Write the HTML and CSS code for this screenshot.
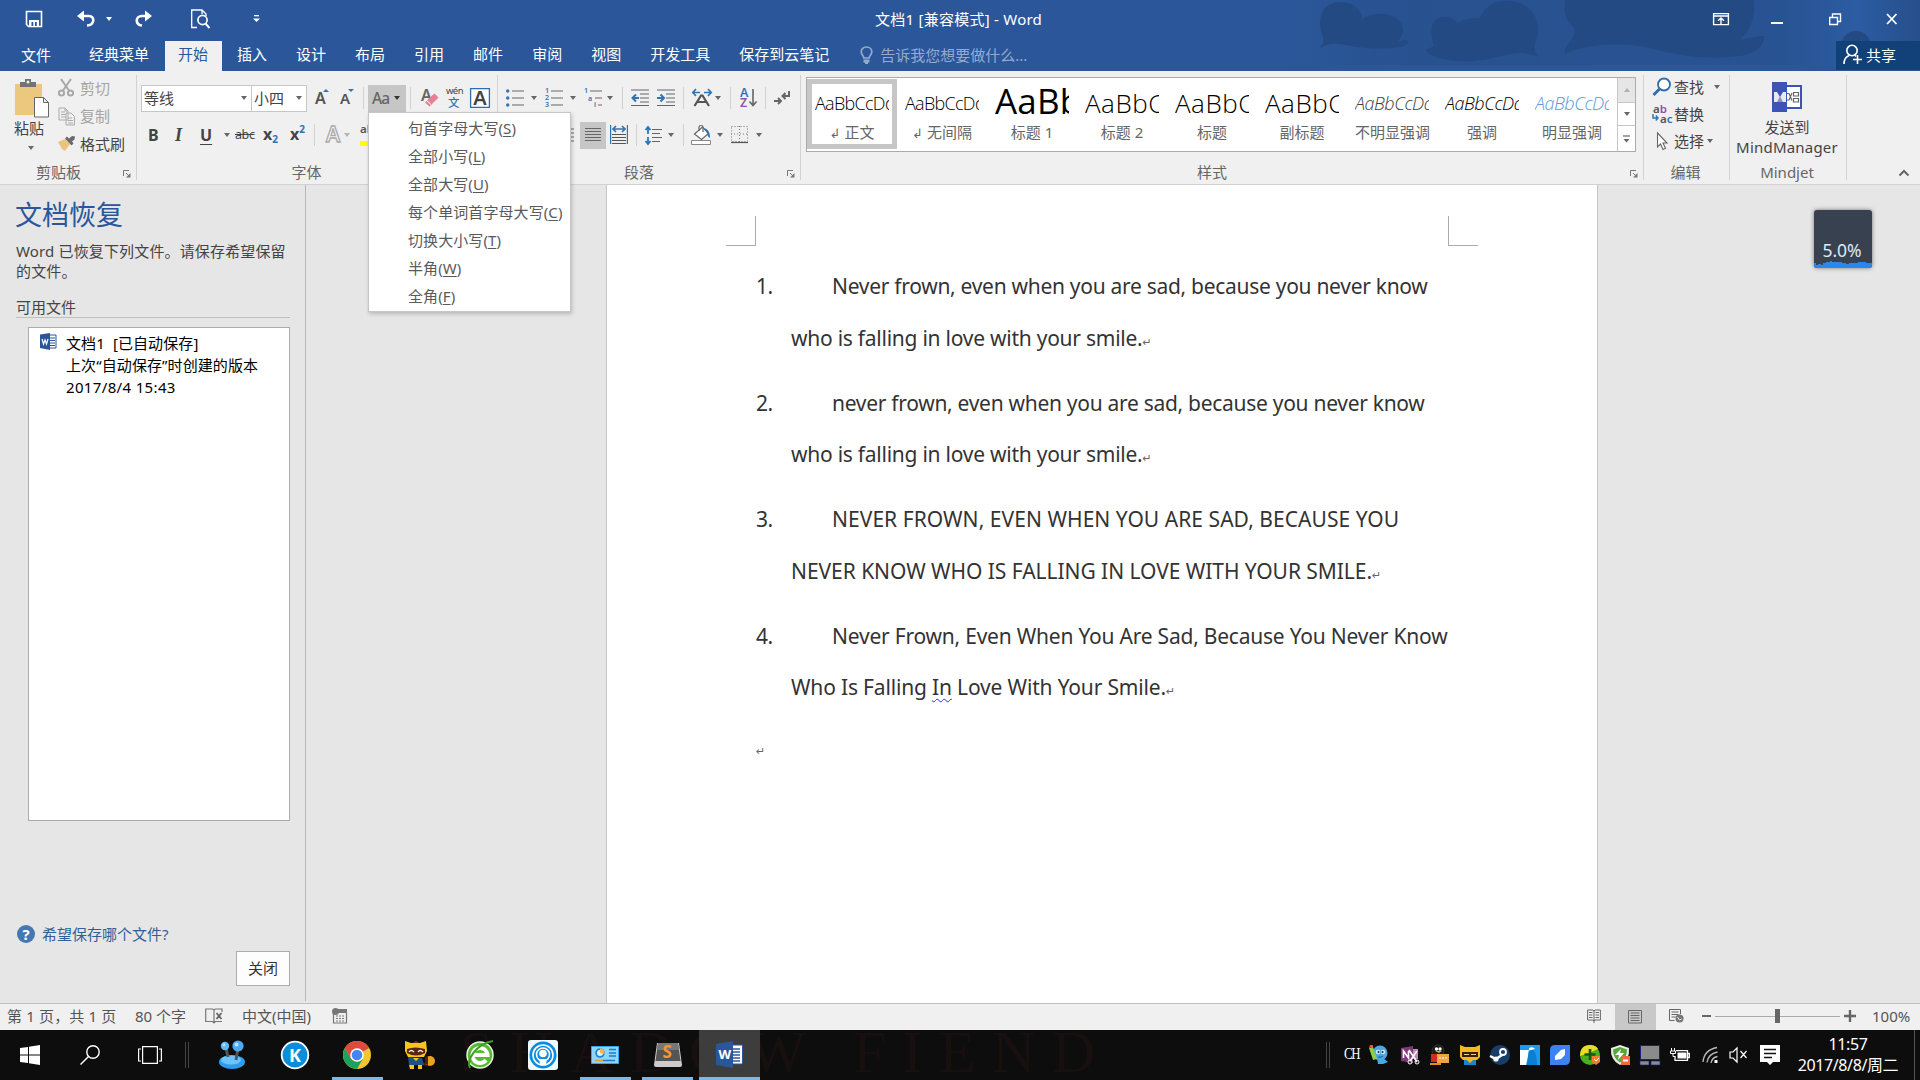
FILE: index.html
```html
<!DOCTYPE html>
<html lang="zh-CN">
<head>
<meta charset="utf-8">
<title>文档1 [兼容模式] - Word</title>
<link rel="stylesheet" href="styles.css">
</head>
<body>
<div class="app">
<header class="head">
  <svg class="head-art" width="640" height="65" viewBox="1280 0 640 65">
    <defs><linearGradient id="g" x1="0" x2="1"><stop offset="0" stop-color="#264f8b" stop-opacity="0"/><stop offset=".2" stop-color="#264f8b" stop-opacity=".7"/><stop offset=".75" stop-color="#264f8b" stop-opacity=".6"/><stop offset=".9" stop-color="#2c5ca3"/><stop offset="1" stop-color="#264f8b"/></linearGradient></defs>
    <rect x="1280" width="640" height="65" fill="url(#g)"/>
    <g fill="#234a82">
      <path d="M1320 48C1328 38 1320 36 1320 24C1320 8 1330 2 1341 2C1354 2 1362 10 1362 20C1374 8 1404 14 1403 30C1403 36 1398 40 1398 42C1408 38 1412 42 1404 46C1380 52 1350 46 1340 44C1332 43 1326 44 1320 48Z"/>
      <path d="M1434 46C1428 28 1432 17 1445 17C1454 17 1458 23 1458 23C1468 17 1476 18 1480 18C1486 4 1498 0 1509 1C1530 2 1539 17 1538 32C1538 42 1530 46 1538 57C1524 50 1512 54 1496 57C1470 66 1430 60 1426 50Z"/>
      <path d="M1565 0H1754C1756 20 1748 32 1740 40C1750 38 1756 36 1764 36C1764 48 1752 56 1730 57C1690 60 1670 52 1640 46C1606 42 1580 46 1565 54C1564 44 1576 40 1574 28C1564 20 1564 8 1565 0Z"/>
      <circle cx="1856" cy="46" r="15"/>
    </g>
  </svg>
  <div class="titlebar">
    <svg width="18" height="18"><path d="M1.500 1.500h15v15h-13l-2-2z" fill="none" stroke="#fff" stroke-width="1.600"/><path d="M4 10h10v6H4z" fill="#fff"/><path d="M6.500 12h1.800v4H6.500z" fill="#2b579a"/><path d="M10 12h1.800v4H10z" fill="#2b579a"/></svg>
    <svg width="20" height="18"><path d="M3 6h9c6 0 6 9-2 9.500" fill="none" stroke="#fff" stroke-width="2.600"/><path d="M0 6l7-5.500v11z" fill="#fff"/></svg>
    <i class="caret white"></i>
    <svg width="20" height="18"><path d="M15 6H8C1 6 1 14.500 8 15.500" fill="none" stroke="#fff" stroke-width="2.600"/><path d="M18 6l-7-5.500v11z" fill="#fff"/></svg>
    <svg width="20" height="20"><path d="M6 18.500H.7V1H11l4 4v2M11 1v4" fill="none" stroke="#fff" stroke-width="1.300"/><circle cx="11.500" cy="11" r="4.600" fill="none" stroke="#fff" stroke-width="1.700"/><path d="M14.500 14.500l4 4.500" stroke="#fff" stroke-width="2"/></svg>
    <svg width="8" height="8"><path d="M1 .7h5" stroke="#fff" stroke-width="1.300"/><path d="M0 3.500h7l-3.500 3.500z" fill="#fff"/></svg>
    <span class="doc-title">文档1 [兼容模式] - Word</span>
    <svg width="17" height="13"><path d="M.6.600h14.800v11H.6zM.6 3h14.800M8 11V5M5 7.800L8 5l3 2.800" fill="none" stroke="#fff" stroke-width="1.400"/></svg>
    <svg width="12" height="13"><path d="M0 10h12" stroke="#fff" stroke-width="2"/></svg>
    <svg width="13" height="13"><path d="M.7 4.500h7.800v7H.7zM3.500 4V1h8v7.500H9" fill="none" stroke="#fff" stroke-width="1.400"/></svg>
    <svg width="12" height="12"><path d="M1 1l9.500 10M10.500 1L1 11" stroke="#fff" stroke-width="1.800"/></svg>
  </div>
  <nav class="tabs">
    <span class="tab file">文件</span><span class="tab">经典菜单</span><span class="tab active">开始</span><span class="tab">插入</span><span class="tab">设计</span><span class="tab">布局</span><span class="tab">引用</span><span class="tab">邮件</span><span class="tab">审阅</span><span class="tab">视图</span><span class="tab">开发工具</span><span class="tab">保存到云笔记</span>
    <span class="tell"><svg width="13" height="18"><path d="M3.800 12C3.800 9.500 1.200 9 1.200 5.800 1.200 3 3.500 1 6.500 1s5.300 2 5.300 4.800C11.800 9 9.200 9.500 9.200 12z" fill="none" stroke="#95abcc" stroke-width="1.700"/><path d="M3.500 13.500h6v3h-1.500v1.500h-3v-1.500h-1.500z" fill="#95abcc"/></svg>告诉我您想要做什么...</span>
    <span class="share"><svg width="20" height="21"><circle cx="9" cy="6.500" r="5.200" fill="none" stroke="#fff" stroke-width="1.600"/><path d="M1 20c0-5 2.500-7.500 5-8.500M11.500 11l1.500 1.500M10 15.500h9M14.500 11v9" fill="none" stroke="#fff" stroke-width="1.600"/></svg>共享</span>
  </nav>
</header>

<section class="ribbon">
  <div class="group clip">
    <div class="clip-body">
      <div class="paste">
        <svg width="36" height="40"><path d="M1 5h27v31H1z" fill="#ecc87e"/><path d="M6 8V3h5V0h6v3h5v5z" fill="#737373"/><circle cx="14" cy="3" r="1.500" fill="#f0f0f0"/><path d="M20.500 18.500h9l5 5V38h-14zM29.500 18.500v5h5" fill="#fff" stroke="#666"/></svg>
        <span>粘贴</span><i class="caret"></i>
      </div>
      <div class="clip-list">
        <span class="off"><svg width="17" height="18"><g fill="none" stroke="#a8a8a8" stroke-width="2"><circle cx="3.500" cy="14" r="2.600"/><circle cx="12.500" cy="14" r="2.600"/><path d="M3 0l8 11.500M13 0L5 11.500"/></g></svg>剪切</span>
        <span class="off"><svg width="18" height="19"><path d="M1 1h6l3 3v9H1zM7 1v3h3M3 5h4M3 7.500h5M3 10h5M8 6h5l3.500 3.500V18H8z" fill="#f0f0f0" stroke="#ababab"/><path d="M10 11h4M10 13.500h5M10 16h5" stroke="#ababab"/></svg>复制</span>
        <span><svg width="18" height="16"><path d="M0 6l7-3 5 5-5 7-3-2z" fill="#ecc280"/><path d="M7 2.500l2-2 2 2 3-2.500 3 .5-.5 3-2.500 2 1.500 2-2 2z" fill="#6a6a6a"/></svg>格式刷</span>
      </div>
    </div>
    <footer><span>剪贴板</span><svg class="launch" width="8" height="8"><path d="M.5 6V.5H6M3 3l3 3" fill="none" stroke="#777"/><path d="M7.500 3v4.500H3z" fill="#777"/></svg></footer>
  </div>

  <div class="group font">
    <div class="row font1">
      <span class="combo">等线<i class="caret"></i></span>
      <span class="combo">小四<i class="caret"></i></span>
      <span class="glyph grow">A<svg width="6" height="4"><path d="M0 3l3-3 3 3z" fill="#2e75b6"/></svg></span>
      <span class="glyph grow small">A<svg width="6" height="4"><path d="M0 0h6L3 3z" fill="#2e75b6"/></svg></span>
      <i class="bar"></i>
      <span class="case">Aa<i class="caret"></i></span>
      <i class="bar"></i>
      <svg width="18" height="20"><text x="0" y="13" class="t-a">A</text><path d="M9.500 9l4-3.500 4 4-9 9-4.500-4z" fill="#e87f95"/><path d="M5.500 12.500l4.500 4" stroke="#fff"/></svg>
      <svg width="17" height="20"><text x="0" y="6" class="t-wen">wén</text><text x="2" y="18.500" class="t-zh">文</text></svg>
      <svg width="20" height="20"><path d="M.6.600h18.800v18.800H.6z" fill="#fff" stroke="#2f6da8" stroke-width="1.300"/><text x="3.200" y="16.500" class="t-box">A</text></svg>
    </div>
    <div class="row font2">
      <b>B</b><b class="it">I</b><b class="un">U</b><i class="caret"></i><span class="strike">abc</span>
      <span class="sub">x<small>2</small></span><span class="sup">x<small>2</small></span><i class="bar"></i>
      <svg width="17" height="20"><text x="1" y="17" class="t-outline">A</text></svg><i class="caret pale"></i>
      <svg width="20" height="22"><text x="0" y="9" class="t-ab">ab</text><path d="M0 17h20v5H0z" fill="#ff0"/></svg>
    </div>
    <footer><span>字体</span></footer>
    <div class="menu">
      <span>句首字母大写(<u>S</u>)</span><span>全部小写(<u>L</u>)</span><span>全部大写(<u>U</u>)</span><span>每个单词首字母大写(<u>C</u>)</span><span>切换大小写(<u>T</u>)</span><span>半角(<u>W</u>)</span><span>全角(<u>F</u>)</span>
    </div>
  </div>

  <div class="group para">
    <div class="row para1">
      <svg width="19" height="18"><path d="M6 2h12M6 9h12M6 16h12" stroke="#666" stroke-width="1.200"/><g fill="#2e75b6"><circle cx="1.700" cy="2" r="1.700"/><circle cx="1.700" cy="9" r="1.700"/><circle cx="1.700" cy="16" r="1.700"/></g></svg><i class="caret"></i>
      <svg width="19" height="20"><path d="M6 3h12M6 10h12M6 17h12" stroke="#666" stroke-width="1.200"/><text x="0" y="5" class="t-n">1</text><text x="0" y="12" class="t-n">2</text><text x="0" y="19" class="t-n">3</text></svg><i class="caret"></i>
      <svg width="19" height="20"><path d="M6 3h12M11 10h7M14 17h4" stroke="#666" stroke-width="1.200"/><text x="0" y="5" class="t-n">1</text><text x="4" y="12.500" class="t-n">a</text><text x="10" y="19" class="t-n">i</text></svg><i class="caret"></i>
      <i class="bar"></i>
      <svg width="18" height="18"><path d="M0 1h18M9 5h9M9 9h9M9 13h9M0 16.500h18" stroke="#666" stroke-width="1.200"/><path d="M8 9H2M5 5.500L1.500 9 5 12.500" fill="none" stroke="#2e75b6" stroke-width="2"/></svg>
      <svg width="18" height="18"><path d="M0 1h18M9 5h9M9 9h9M9 13h9M0 16.500h18" stroke="#666" stroke-width="1.200"/><path d="M0 9h6M3.500 5.500L7 9l-3.500 3.500" fill="none" stroke="#2e75b6" stroke-width="2"/></svg>
      <i class="bar"></i>
      <svg width="20" height="18"><path d="M1 3.500h7M4 0L.8 3.500 4 7M19 3.500h-7M16 0l3.200 3.500L16 7" fill="none" stroke="#2e75b6" stroke-width="1.700"/><path d="M2.500 17L9 6.500h1.500L17 17M5.500 13h9" fill="none" stroke="#555" stroke-width="2.200"/></svg><i class="caret"></i>
      <i class="bar"></i>
      <svg width="18" height="20"><text x="0" y="9" class="t-az">A</text><text x="0" y="19" class="t-az z">Z</text><path d="M13 1v16M9.500 13.500L13 17.500l3.500-4" fill="none" stroke="#666" stroke-width="1.600"/></svg>
      <i class="bar"></i>
      <svg width="17" height="16"><path d="M15 1v5H9M11.500 3L8.500 6l3 3M0 11h6M4 8l3 3-3 3" fill="none" stroke="#666" stroke-width="2"/></svg>
    </div>
    <div class="row para2">
      <svg width="4" height="16"><path d="M0 2h4M0 6h4M0 10h4M0 14h4" stroke="#666" stroke-width="1.200"/></svg>
      <span class="on"><svg width="17" height="16"><path d="M0 1.500h16M0 4.500h16M0 7.500h16M0 10.500h16M0 13.500h16" stroke="#666"/></svg></span>
      <svg width="18" height="20"><path d="M.6 0v19M17.400 0v19" stroke="#2e75b6" stroke-width="1.200"/><path d="M3 4h12M6 1L3 4l3 3M12 1l3 3-3 3" fill="none" stroke="#2e75b6" stroke-width="1.700"/><path d="M2 9.500h14M2 12.500h14M2 15.500h14M2 18.500h14" stroke="#555"/></svg>
      <i class="bar"></i>
      <svg width="18" height="19"><path d="M7 3.500h10M7 7.500h8M7 11.500h10M7 15.500h8" stroke="#666" stroke-width="1.200"/><path d="M3 1v7M.5 4L3 1l2.500 3M3 11v7M.5 15L3 18l2.500-3" fill="none" stroke="#2e75b6" stroke-width="1.800"/></svg><i class="caret"></i>
      <i class="bar"></i>
      <svg width="20" height="20"><path d="M.5 15.500h19v4H.5z" fill="#fff" stroke="#888"/><path d="M3.500 9l8-7 6 6.500-7 6z" fill="#fff" stroke="#666" stroke-width="1.200"/><path d="M8 6V2c0-2 4-2 4 0v5" fill="none" stroke="#666" stroke-width="1.200"/><path d="M13 3c4 1 6 4 6 10-2-1-3-3-2.500-5z" fill="#2e75b6"/></svg><i class="caret"></i>
      <svg width="17" height="18"><path d="M.5.500h16v15H.5zM8.500 0v16M0 8h17" fill="none" stroke="#777" stroke-dasharray="1 2"/><path d="M0 16.500h17" stroke="#555" stroke-width="1.200"/></svg><i class="caret"></i>
    </div>
    <footer><span>段落</span><svg class="launch" width="8" height="8"><path d="M.5 6V.5H6M3 3l3 3" fill="none" stroke="#777"/><path d="M7.500 3v4.500H3z" fill="#777"/></svg></footer>
  </div>

  <div class="group styles">
    <div class="gallery">
      <div class="style sel"><b>AaBbCcDd</b><span><em>↲</em>正文</span></div>
      <div class="style"><b>AaBbCcDd</b><span><em>↲</em>无间隔</span></div>
      <div class="style h1"><b>AaBb</b><span>标题 1</span></div>
      <div class="style h2"><b>AaBbC</b><span>标题 2</span></div>
      <div class="style h2"><b>AaBbC</b><span>标题</span></div>
      <div class="style h2"><b>AaBbC</b><span>副标题</span></div>
      <div class="style slant soft"><b>AaBbCcDd</b><span>不明显强调</span></div>
      <div class="style slant"><b>AaBbCcDd</b><span>强调</span></div>
      <div class="style slant blue"><b>AaBbCcDd</b><span>明显强调</span></div>
      <div class="scroller"><span class="dis"><svg width="6" height="4"><path d="M0 4l3-4 3 4z" fill="#b0b0b0"/></svg></span><span><svg width="6" height="4"><path d="M0 0h6L3 4z" fill="#666"/></svg></span><span><svg width="7" height="8"><path d="M0 1h7" stroke="#666" stroke-width="1.200"/><path d="M.5 4h6L3.500 7.500z" fill="#666"/></svg></span></div>
    </div>
    <footer><span>样式</span><svg class="launch" width="8" height="8"><path d="M.5 6V.5H6M3 3l3 3" fill="none" stroke="#777"/><path d="M7.500 3v4.500H3z" fill="#777"/></svg></footer>
  </div>

  <div class="group edit">
    <div class="edit-list">
      <span><svg width="20" height="20"><circle cx="12" cy="7.500" r="6" fill="#fff" stroke="#2f6da8" stroke-width="1.800"/><path d="M7.500 12L1.500 18" stroke="#2f6da8" stroke-width="2.800"/></svg>查找<i class="caret wide"></i></span>
      <span><svg width="20" height="20"><text x="1" y="9" class="t-ab">a<tspan fill="#8e4fae">b</tspan></text><text x="8" y="18.500" class="t-ab">a<tspan fill="#2e75b6">c</tspan></text><path d="M1 10v4h5M3.800 11.500L6 14l-2.200 2.500" fill="none" stroke="#2e75b6" stroke-width="1.500"/></svg>替换</span>
      <span><svg width="20" height="20"><path d="M5.500 2v14l3-3 2.500 5.500 2.500-1.200L11 12h4z" fill="#fff" stroke="#666" stroke-width="1.100"/></svg>选择<i class="caret"></i></span>
    </div>
    <footer><span>编辑</span></footer>
  </div>

  <div class="group mind">
    <div class="mind-body">
      <svg width="30" height="30"><path d="M14 4h15v22H14z" fill="#fff" stroke="#3c55b5" stroke-width="2"/><path d="M0 0h15v30H0z" fill="#3c55b5"/><path d="M2 10h3l3 5 3-5h3v10H2z" fill="#e8eaf2"/><path d="M5 20l3-6 3 6z" fill="#8f96ab"/><path d="M15 11.500h2l3 7M20 11l-3 7h-2M21.500 10.500h5v3.500h-5zM21.500 16.500h5V20h-5z" fill="none" stroke="#666" stroke-width="1.200"/></svg>
      <span>发送到</span><span class="mm">MindManager</span>
    </div>
    <footer><span>Mindjet</span></footer>
  </div>
  <svg class="collapse" width="12" height="8"><path d="M1.500 6.500L6 2l4.500 4.500" fill="none" stroke="#666" stroke-width="2"/></svg>
</section>

<main class="work">
  <aside class="recovery">
    <h1>文档恢复</h1>
    <p>Word 已恢复下列文件。请保存希望保留的文件。</p>
    <h2>可用文件</h2>
    <div class="files">
      <svg width="17" height="17"><path d="M8 2h8v13H8z" fill="#fff" stroke="#2b579a"/><path d="M10 5h5M10 7.500h5M10 10h5M10 12.500h5" stroke="#2b579a"/><path d="M0 1.500L10 0v17L0 15z" fill="#2b579a"/><path d="M2 6l1.500 5L5 7l1.500 4L8 6" fill="none" stroke="#fff" stroke-width="1.200"/></svg>
      <div>文档1&nbsp; [已自动保存]<br>上次“自动保存”时创建的版本<br><span class="date">2017/8/4 15:43</span></div>
    </div>
    <div class="help"><span class="q">?</span>希望保存哪个文件?</div>
    <button class="close">关闭</button>
  </aside>
  <div class="canvas">
    <article class="page">
      <div class="marks"><i class="ml"></i><i class="mr"></i></div>
      <ol class="doc">
        <li><span class="num">1.</span><p><span class="l1 a">Never frown, even when you are sad, because you never know</span><br><span class="b">who is falling in love with your smile.</span><em>↵</em></p></li>
        <li><span class="num">2.</span><p><span class="l1 a">never frown, even when you are sad, because you never know</span><br><span class="b">who is falling in love with your smile.</span><em>↵</em></p></li>
        <li><span class="num">3.</span><p><span class="l1 c">NEVER FROWN, EVEN WHEN YOU ARE SAD, BECAUSE YOU</span><br><span class="d">NEVER KNOW WHO IS FALLING IN LOVE WITH YOUR SMILE.</span><em>↵</em></p></li>
        <li><span class="num">4.</span><p><span class="l1 e">Never Frown, Even When You Are Sad, Because You Never Know</span><br><span class="f">Who Is Falling <u class="wavy">In</u> Love With Your Smile.</span><em>↵</em></p></li>
      </ol>
      <div class="empty"><em>↵</em></div>
    </article>
  </div>
  <div class="gauge"><span>5.0%</span><svg width="58" height="7"><path d="M0 2h2v2h2v-1h3v1h2V2h3V1h4V0h2v1h10v1h4v1h3V2h9V1h8v1h6v5H0z" fill="#2b87ee"/></svg></div>
</main>

<div class="status">
  <span class="s-page">第 1 页，共 1 页</span><span>80 个字</span>
  <svg width="18" height="16"><path d="M9 2v13M9 2L7.500 1H.7v12.500h6.800L9 15l1.500-1.500H17M9 2l1.500-1H17v3" fill="none" stroke="#777" stroke-width="1.200"/><path d="M11.500 5l5 6M16.500 5l-5 6" stroke="#666" stroke-width="1.800"/></svg>
  <span>中文(中国)</span>
  <svg class="macro" width="16" height="16"><path d="M1.500 4h13v11h-13z" fill="none" stroke="#777" stroke-width="1.200"/><path d="M6 1h9v4H6z" fill="#777"/><circle cx="3.500" cy="3.500" r="3.500" fill="#777"/><path d="M4 8h9M4 10.500h9M4 13h9" stroke="#777" stroke-dasharray="2 1"/></svg>
  <div class="views">
    <svg width="14" height="14"><path d="M7 2v12M7 2L6 1H.6v10H6l1 1 1-1h5.400V1H8zM2 3.500h3.500M2 6h3.500M2 8.500h3.500M8.500 3.500H12M8.500 6H12M8.500 8.500H12" fill="none" stroke="#666"/></svg>
    <span class="vsel"><svg width="15" height="14"><path d="M.5.500h13v12.500H.5zM2.500 3h9M2.500 5.500h9M2.500 8h9M2.500 10.500h9" fill="none" stroke="#666"/></svg></span>
    <svg width="15" height="14"><path d="M5.500 11.500H.5V.5h11V5M2.500 3h7M2.500 5.500h7M2.500 8h4" fill="none" stroke="#666"/><circle cx="10.500" cy="9.500" r="4" fill="#777"/><path d="M8.500 8l2 3 2-1" fill="none" stroke="#eee"/></svg>
    <i class="minus"></i><span class="track"><i></i></span>
    <svg width="12" height="12"><path d="M6 0v12M0 6h12" stroke="#666" stroke-width="2.400"/></svg>
    <span>100%</span>
  </div>
</div>

<div class="taskbar">
  <div class="wall">SHADOW FIEND</div>
  <div class="tasks">
    <span><svg width="20" height="20"><path d="M0 3l8-1v7.500H0zM9 1.800L20 0v9.500H9zM0 10.500h8V18l-8-1zM9 10.500h11V20L9 18.200z" fill="#fff"/></svg></span>
    <span><svg width="20" height="20"><circle cx="13" cy="7" r="6.200" fill="none" stroke="#fff" stroke-width="1.400"/><path d="M8.500 11.500L.5 19.500" stroke="#fff" stroke-width="1.500"/></svg></span>
    <span><svg width="24" height="20"><path d="M4.600 1.600h14.800v16.800H4.600zM3 4H.6v12H3M21 4h2.400v12H21" fill="none" stroke="#fff" stroke-width="1.200"/></svg></span>
    <span><svg width="5" height="26"><path d="M.5 0v26M3.500 0v26" stroke="#444"/></svg></span>
    <span class="joy"><svg width="28" height="30"><ellipse cx="14" cy="22" rx="13" ry="7" fill="#2f9bf0"/><ellipse cx="13" cy="20" rx="10" ry="4.500" fill="#6cc4ff"/><path d="M8 8l2 9M20 8l-2 12" stroke="#555" stroke-width="3"/><circle cx="7" cy="6" r="4.200" fill="#5db8fb"/><circle cx="20" cy="6" r="5.600" fill="#4aaaf5"/><circle cx="18.500" cy="4.500" r="2" fill="#b5e2ff"/><circle cx="6" cy="5" r="1.400" fill="#b5e2ff"/></svg></span>
    <span><svg width="30" height="30"><circle cx="15" cy="15" r="13.300" fill="#0a8ddb" stroke="#fff" stroke-width="1.800"/><text x="9" y="21.500" class="t-k">K</text></svg></span>
    <span class="run"><svg width="28" height="28" viewBox="-14 -14 28 28"><circle r="14" fill="#f3c52f"/><path d="M0 0L-12.100 -7A14 14 0 0 1 12.100 -7z" fill="#dd4b3e"/><path d="M-12.100 -7A14 14 0 0 0 0 14L6 3.500-6 3.500z" fill="#1fa05d"/><path d="M0-7H12.100A14 14 0 0 0-12.100-7L-6 3.500z" fill="#dd4b3e"/><circle r="6.800" fill="#fff"/><circle r="5.300" fill="#4486f4"/></svg></span>
    <span><svg width="31" height="30"><path d="M17 23q6 3 9-1" fill="none" stroke="#4b220e" stroke-width="3"/><ellipse cx="26" cy="21" rx="5" ry="5" fill="#e9a21c"/><path d="M21 17l3-1v9l-3-1z" fill="#4b220e"/><path d="M1 1l6 2h9l6-2 1 10-3 6H4l-3-6z" fill="#f8c51e"/><path d="M9 3q3-4 6 0z" fill="#6b3418"/><path d="M3 9q8-3 18 0v4q-9 5-18 0z" fill="#5a2414"/><path d="M5 12q2-3 5 0M14 12q2-3 5 0" fill="none" stroke="#f5efe0" stroke-width="1.300"/><path d="M4 17l14 1 2 7H5z" fill="#1d5286"/><path d="M9 18l3 3 3-3zM5 25h5v4H6zM14 25h4v4h-4z" fill="#f8c51e"/></svg></span>
    <span><svg width="30" height="30"><circle cx="14" cy="15" r="13" fill="#58ba33" stroke="#e8f5e0" stroke-width="1.500"/><path d="M20 20a7.500 7.500 0 1 1 1.500-5H8" fill="none" stroke="#fff" stroke-width="4"/><path d="M4 28C0 20 10 4 27 1" fill="none" stroke="#3c9c25" stroke-width="2"/></svg></span>
    <span><svg width="30" height="30"><rect width="30" height="30" rx="3" fill="#f1f9fd"/><circle cx="15" cy="15" r="13.500" fill="#0e8ade"/><circle cx="15" cy="15" r="10" fill="none" stroke="#fff" stroke-width="1.600"/><circle cx="15" cy="14.500" r="6.500" fill="none" stroke="#fff" stroke-width="1.600"/><circle cx="15" cy="13.500" r="3.800" fill="#fff"/><path d="M11 19h8l-1 5q-3 2-6 0z" fill="#fff"/></svg></span>
    <span class="run"><svg width="28" height="20"><path d="M.5 1.500h27v17H.5z" fill="#8fd4fb" stroke="#38a3e8"/><circle cx="9" cy="8" r="4.800" fill="#1d86d8"/><circle cx="9" cy="8" r="3" fill="#d8f0ff"/><path d="M9 8V3.200A4.800 4.800 0 0 1 13.500 9z" fill="#f7b64a"/><path d="M18 4.500h7M18 8h7M18 11h7" stroke="#1d7cc9" stroke-width="1.600"/><path d="M4 15.500h8" stroke="#ef9b2e" stroke-width="1.500"/><path d="M12 15.500h12" stroke="#1d7cc9" stroke-width="1.500"/></svg></span>
    <span class="run"><svg width="28" height="26"><path d="M3 1h22l3 22q0 2-2 2H2q-2 0-2-2z" fill="#ccc"/><path d="M4 1h20l2.500 18h-25z" fill="#555"/><path d="M4 1h20l1 7H3z" fill="#777"/><text x="8.500" y="16" class="t-s">S</text></svg></span>
    <span class="run cur"><svg width="28" height="28"><path d="M14 4h12.500v19H14z" fill="#fff" stroke="#2b579a"/><path d="M16 8h8M16 11h8M16 14h8M16 17h8M16 20h8" stroke="#2b579a" stroke-width="1.400"/><path d="M0 3L17 0v27L0 24z" fill="#2b579a"/><text x="2.500" y="18" class="t-w">W</text></svg></span>
  </div>
  <div class="tray">
    <svg width="5" height="26"><path d="M.5 0v26M3.500 0v26" stroke="#444"/></svg>
    <span class="ch">CH</span>
    <svg width="20" height="20"><circle cx="11" cy="8" r="7.500" fill="#4aa8e2"/><path d="M8 13h6l5 4-5 2H9z" fill="#4aa8e2"/><path d="M0 3l4-1 4 12-4 1z" fill="#8fcf4a"/><path d="M0 3l4-1V0H1z" fill="#e5543c"/><circle cx="9" cy="7" r="2.300" fill="#cdeafa"/><circle cx="14" cy="7" r="2.300" fill="#cdeafa"/><circle cx="9.500" cy="7" r="1" fill="#123"/><circle cx="13.500" cy="7" r="1" fill="#123"/><path d="M9 12q3 1 5-1" fill="none" stroke="#1b5c8e"/></svg>
    <svg width="20" height="20"><path d="M0 3l12-2v17L0 16z" fill="#80397b"/><path d="M12 4h5v10h-5z" fill="#b98cb5"/><path d="M2.500 13V6l5 7V6M8 5l8 12M16 6L9 16" fill="none" stroke="#fff" stroke-width="1.600"/><circle cx="9" cy="17" r="2" fill="none" stroke="#fff"/><circle cx="16" cy="17" r="2" fill="none" stroke="#fff"/></svg>
    <svg width="20" height="20"><ellipse cx="8" cy="6" rx="6" ry="6" fill="#1b1b1b" stroke="#333"/><circle cx="6.500" cy="4" r="1.700" fill="#fff"/><circle cx="10" cy="4" r="1.700" fill="#fff"/><path d="M5 6h7l-3 2z" fill="#f4a51c"/><path d="M1 9h12v8H1z" fill="#d02d1f"/><path d="M7 9h12v9H7z" fill="#f0a63e"/><path d="M9 13h8" stroke="#fff" stroke-dasharray="2 1"/><path d="M0 18h11v2H0z" fill="#e88b1c"/></svg>
    <svg width="20" height="20"><path d="M0 0l5 2h10l5-2v12l-3 3H3l-3-3z" fill="#f3bb20"/><path d="M2 7h16v5H2z" fill="#3a1c10"/><path d="M4 9.500h5M11 9.500h5" stroke="#e8d090"/><path d="M4 15h12v5H4z" fill="#1e82cf"/><path d="M7 15h6l-3 3z" fill="#f3bb20"/></svg>
    <svg width="20" height="20"><circle cx="10" cy="10" r="10" fill="#173e68"/><circle cx="13" cy="7" r="3" fill="none" stroke="#fff" stroke-width="1.800"/><path d="M0 11l6 3 6-4" fill="none" stroke="#fff" stroke-width="2.500"/><circle cx="6" cy="14" r="2.600" fill="#fff"/></svg>
    <svg width="20" height="20"><path d="M0 0h20v20H0z" fill="#1b9bf0"/><path d="M0 5h9q-1 7-3 15H0z" fill="#fff"/><path d="M9 5q8-3 8 15H7z" fill="#0a7fd4"/><path d="M9 3q4-2 6 1l-6 1.500z" fill="#fff"/></svg>
    <svg width="20" height="20"><path d="M5 0h15v15q0 5-5 5H0V5q0-5 5-5z" fill="#3c82f2"/><path d="M5 15V11l6-6 4-1v6l-4 4z" fill="#fff"/></svg>
    <svg width="20" height="20"><circle cx="10" cy="10" r="10" fill="#4caf20"/><path d="M0 11Q0 0 10 0 16 0 18 4 10 8 0 11z" fill="#e9dc2c"/><path d="M10 4v11M4.500 9.500h11" stroke="#115c12" stroke-width="2.600"/><path d="M12 11h8v6l-4 3-4-3z" fill="#ef7e2f"/><path d="M14 14l2 2 3-3" fill="none" stroke="#fff"/></svg>
    <svg width="20" height="20"><path d="M10 0l9 3q1 12-9 17Q0 15 1 3z" fill="#ececec"/><path d="M10 2l7 2.500q0 9-7 13-7-4-7-13z" fill="#58a839"/><path d="M11 4L5 10h4l-1 5 6-7h-4z" fill="#fff"/><path d="M11 11h9v9h-9z" fill="#ef6a43"/><path d="M13 15.500h5" stroke="#fff" stroke-width="2"/></svg>
    <svg width="20" height="20"><path d="M.5.500h19v14H.5z" fill="#8b8b8b" stroke="#1c1f80"/><path d="M0 16h9v4H0zM11 16h9v4h-9z" fill="#8b8b8b" stroke="#1c1f80" stroke-width=".6"/></svg>
    <svg width="20" height="20"><path d="M6 5.600h11.500v9.800H5V11M17.500 8.500h1.800v4h-1.800" fill="none" stroke="#fff" stroke-width="1.300"/><path d="M7.500 7.500h9v6h-9z" fill="#fff"/><path d="M1.500 3v3M4.500 3v3M.5 6h5v2.500H.5zM3 8v3.500h2" fill="none" stroke="#fff"/></svg>
    <svg width="18" height="20"><g fill="none" stroke="#bbb" stroke-width="1.300"><path d="M1 17Q2 5 15 2.500M5 17.500Q6 9 15.500 7M9 18Q10 12.500 15.500 11.500"/></g><path d="M12.500 15h3v3h-3z" fill="#fff"/></svg>
    <svg width="20" height="20"><path d="M1 7h3l4-4v14l-4-4H1zM11.500 6l6 7M17.500 6l-6 7" fill="none" stroke="#fff" stroke-width="1.200"/></svg>
    <svg width="20" height="20"><path d="M0 0h20v17h-7l-3 3-3-3H0z" fill="#fff"/><path d="M4 4.500h12M4 8.500h12M4 12.500h8" stroke="#111" stroke-width="1.300"/></svg>
    <div class="clock">11:57<br>2017/8/8/周二</div>
    <i class="edge"></i>
  </div>
</div>
</div>
</body>
</html>
```
FILE: styles.css
```css
* { box-sizing: border-box; }
body { margin: 0; background: #e6e6e6; overflow: hidden; }
.app { width: 1920px; height: 1080px; display: grid; grid-template-rows: 71px 114px 818px 27px 50px; font: 15px/20px "Noto Sans", "Noto Sans CJK SC", sans-serif; color: #444; }
svg { display: block; overflow: visible; flex: none; }
i, em { font-style: normal; }
.caret { display: block; width: 0; height: 0; border: 3.5px solid transparent; border-top: 4px solid #666; border-bottom: 0; }
.caret.white { border-top-color: #fff; }
.caret.pale { border-top-color: #b5b5b5; }

/* header */
.head { position: relative; background: #2b579a; color: #fff; display: grid; grid-template-rows: 41px 30px; }
.head-art { position: absolute; right: 0; top: 0; }
.titlebar { position: relative; display: grid; grid-template-columns: 52px 29px 28px 57px 62px 622px 838px 58px 58px 57px 12px; padding: 0 0 3px 25px; align-items: center; }
.doc-title { white-space: nowrap; letter-spacing: .25px; }
.tabs { position: relative; display: flex; align-items: stretch; padding-left: 21px; gap: 29px; line-height: 26px; white-space: nowrap; }
.tab.file { margin-right: 9px; padding-top: 1px; }
.tab.active { background: #f0f0f0; color: #2b579a; padding: 0 14px 0 13px; margin: 0 -14px 0 -13px; }
.tell { display: flex; align-items: center; gap: 7px; color: #95abcc; margin-left: 2px; padding-bottom: 2px; }
.share { margin-left: auto; width: 84px; height: 29px; background: #124078; display: flex; align-items: center; gap: 3px; padding: 0 0 2px 7px; }

/* ribbon */
.ribbon { background: #f0f0f0; border-bottom: 1px solid #d2d2d2; display: flex; position: relative; white-space: nowrap; }
.group { position: relative; display: flex; flex-direction: column; height: 105px; margin-top: 4px; border-right: 1px solid #d2d2d2; flex: none; }
.group footer { margin-top: auto; height: 16px; line-height: 16px; display: grid; grid-template-columns: 1fr; text-align: center; color: #666; position: relative; }
.launch { position: absolute; right: 5px; top: 6px; }
.clip { width: 137px; } .font { width: 361px; } .para { width: 303px; } .styles { width: 843px; } .edit { width: 86px; } .mind { width: 117px; }
.clip footer { padding-right: 19px; }
.styles footer { padding-right: 20px; }
.para footer { padding-right: 20px; }
.font footer { padding-right: 21px; }
.edit footer, .mind footer { padding-right: 2px; }
.clip-body { display: flex; }
.paste { width: 58px; display: flex; flex-direction: column; align-items: center; padding-top: 4px; }
.paste span { line-height: 20px; margin-top: -1px; }
.paste svg { margin-left: 6px; }
.paste .caret { margin-top: 8px; margin-left: 4px; }
.clip-list { display: grid; grid-auto-rows: 28px; margin-top: -1px; }
.clip-list span { display: flex; align-items: center; gap: 5px; }
.clip-list svg { width: 17px; }
.off { color: #a5a5a5; }
.row { display: grid; align-items: center; height: 40px; }
.font1 { grid-template-columns: 110px 64px 25px 23px 5px 42px 11px 25px 24px 20px; padding: 0 0 0 4px; margin-top: 3px; }
.font2 { grid-template-columns: 27px 25px 24px 11px 28px 27px 24px 11px 19px 16px 20px; padding-left: 11px; height: 34px; }
.bar { width: 1px; height: 22px; background: #d0d0d0; }
.combo { border: 1px solid #c6c6c6; background: #fff; height: 27px; line-height: 24px; padding-left: 2px; display: flex; align-items: center; justify-content: space-between; padding-right: 4px; width: 111px; }
.combo + .combo { width: 56px; }
.glyph { font-weight: 600; font-size: 16px; color: #555; position: relative; width: 14px; }
.glyph.small { font-size: 15px; }
.glyph svg { position: absolute; right: 0; top: 1px; }
.case { background: #c6c6c6; height: 27px; width: 38px; display: flex; align-items: center; padding-left: 4px; gap: 5px; color: #666; font-weight: 500; font-size: 15.5px; letter-spacing: -.8px; }
.case .caret { border-top-color: #333; }
.row b { font-size: 16px; color: #444; }
.it { font-style: italic; font-family: "Liberation Serif", serif; font-size: 18px !important; }
.un { text-decoration: underline; text-underline-offset: 3px; width: 12px; }
.strike { text-decoration: line-through; font-size: 12.5px; letter-spacing: -.4px; }
.sub, .sup { font-weight: 700; font-size: 16px; }
.sub small, .sup small { font-size: 10px; color: #2e75b6; position: relative; }
.sub small { top: 3px; } .sup small { top: -7px; }
.t-a { font: 600 16px "Noto Sans"; fill: #666; }
.t-wen { font: 9.5px "Noto Sans"; letter-spacing: -.6px; fill: #444; }
.t-zh { font: 500 11.5px "Noto Sans CJK SC"; fill: #2e75b6; }
.t-box { font: 600 20px "Noto Sans"; fill: #444; }
.t-outline { font: 600 21px "Noto Sans"; fill: #f6f6f6; stroke: #aaa; stroke-width: 1.3px; }
.t-ab { font: 600 11.5px "Noto Sans"; fill: #555; }
.t-n { font: 600 7px "Noto Sans"; fill: #2e75b6; }
.t-az { font: 600 12.5px "Noto Sans"; fill: #2e75b6; }
.t-az.z { fill: #8e4fae; }
.t-k { font: 700 18px "Noto Sans"; fill: #fff; }
.t-s { font: 700 17px "Noto Sans"; fill: #f79433; }
.t-w { font: 700 13px "Noto Sans"; fill: #fff; }

.menu { position: absolute; left: 231px; top: 37px; width: 203px; height: 200px; background: #fff; border: 1px solid #c6c6c6; box-shadow: 1px 2px 4px rgba(0,0,0,.2); z-index: 5; padding: 1px 0 0 39px; display: grid; grid-auto-rows: 28px; line-height: 28px; letter-spacing: .08px; color: #5a5a5a; }
.menu u { text-underline-offset: 2px; }

.para1 { grid-template-columns: 25px 14px 25px 14px 23px 15px 9px 26px 26px 9px 23px 15px 10px 25px 9px 17px; padding-left: 8px; margin-top: 3px; }
.para2 { grid-template-columns: 10px 30px 26px 9px 23px 15px 8px 26px 14px 25px 10px; padding-left: 72px; height: 34px; }
.on { background: #c6c6c6; width: 26px; height: 27px; display: grid; place-items: center; }

.gallery { margin: 2px 0 0 5px; width: 830px; height: 75px; border: 1px solid #ababab; background: #fff; display: flex; }
.style { width: 90px; height: 70px; margin-top: 1px; padding: 0 8px; display: flex; flex-direction: column; text-align: center; color: #666; }
.style b { font: 300 18px/30px "Open Sans", "Noto Sans", sans-serif; color: #000; height: 40px; padding-top: 9px; text-align: left; overflow: hidden; letter-spacing: -.7px; margin-bottom: 10px; flex: none; display: block; }
.style span { line-height: 20px; margin-top: -7px; }
.style em { font: 13px "DejaVu Sans"; margin-right: 4px; }
.style.sel { border: 5px solid #c6c6c6; padding: 0 3px; }
.sel b { margin-top: -5px; }
.h1 b { font-size: 35px; font-weight: 500; letter-spacing: .2px; padding-top: 7px; }
.h2 b { font-size: 26px; letter-spacing: .5px; padding-top: 9px; font-weight: 350; }
.slant b { font-style: italic; letter-spacing: -.45px; }
.soft b { color: #404040; } .blue b { color: #5b9bd5; }
.scroller { width: 18px; border-left: 1px solid #c6c6c6; display: grid; grid-template-rows: 25px 23px 25px; }
.scroller span { display: grid; place-items: center; border-bottom: 1px solid #c6c6c6; margin: 0; }
.scroller span:last-child { border: 0; }
.dis { background: #e6e6e6; }

.edit-list { display: grid; grid-auto-rows: 27px; padding: 0 0 0 8px; margin-top: -2px; }
.edit-list span { display: flex; align-items: center; gap: 2px; }
.edit-list .caret { margin-left: 1px; }
.edit-list .wide { margin-left: 8px; }
.mind-body { display: flex; flex-direction: column; align-items: center; padding: 7px 2px 0 0; }
.mind-body span { margin-top: 5px; }
.mind-body .mm { margin-top: 0; letter-spacing: .2px; }
.collapse { position: absolute; right: 10px; bottom: 7px; }

/* workspace */
.work { position: relative; display: grid; grid-template-columns: 306px 1fr; background: #e6e6e6; overflow: hidden; }
.recovery { border-right: 1px solid #b8b8b8; height: 816px; padding: 12px 15px 0 15px; display: flex; flex-direction: column; color: #444; }
.recovery h1 { margin: 0; font: 27px/34px "Noto Sans CJK SC", sans-serif; color: #2b579a; }
.recovery p { margin: 10px 0 0 1px; width: 275px; letter-spacing: .15px; }
.recovery h2 { font-size: 15px; line-height: 20px; font-weight: 400; margin: 16px 0 0 1px; padding-bottom: 0; border-bottom: 1px solid #c0c0c0; height: 21px; }
.files { margin: 9px 0 0 13px; height: 494px; background: #fff; border: 1px solid #ababab; color: #000; display: flex; gap: 9px; padding: 4px 0 0 11px; line-height: 22px; }
.files svg { margin-top: 1px; }
.files div { white-space: nowrap; letter-spacing: .1px; }
.date { letter-spacing: .35px; }
.help { margin: 103px 0 0 2px; display: flex; align-items: center; gap: 7px; color: #2f6199; }
.q { width: 18px; height: 18px; border-radius: 50%; background: #4478b0; color: #fff; font-weight: 700; line-height: 18px; text-align: center; }
.close { margin: 7px 0 0; align-self: flex-end; width: 54px; height: 35px; border: 1px solid #ababab; background: #fdfdfd; font: inherit; color: #333; padding: 0 0 2px; }
.page { margin-left: 300px; width: 992px; height: 818px; background: #fff; border: solid #c6c6c6; border-width: 0 1px; padding-top: 31px; }
.marks { display: flex; justify-content: space-between; padding: 0 119px; }
.marks i { width: 30px; height: 30px; border-bottom: 1px solid #ababab; }
.ml { border-right: 1px solid #ababab; } .mr { border-left: 1px solid #ababab; }
.doc { list-style: none; margin: 15px 0 0 149px; padding: 0; font-size: 21px; line-height: 51.5px; color: #333; white-space: nowrap; }
.doc li { display: grid; grid-template-columns: 35px 1fr; height: 103px; margin-bottom: 13.500px; }
.doc p { margin: 0; }
.num { letter-spacing: -.5px; }
.l1 { margin-left: 41px; }
.a { letter-spacing: -.29px; }
.b { letter-spacing: -.25px; }
.c { letter-spacing: .05px; }
.d { letter-spacing: -.05px; }
.e { letter-spacing: -.22px; }
.f { letter-spacing: -.17px; }
.doc em, .empty em { font: 11px "DejaVu Sans"; color: #666; }
.empty { margin: -3px 0 0 149px; line-height: 51px; }
.wavy { text-decoration: underline wavy #2a2af5 1.2px; text-underline-offset: 3px; }
.gauge { position: absolute; left: 1814px; top: 25px; width: 58px; height: 58px; border-radius: 3px; background: #37414f; box-shadow: 0 0 4px rgba(0,0,0,.5); color: #dfe9f5; display: flex; flex-direction: column; justify-content: flex-end; align-items: center; font-size: 17.5px; overflow: hidden; }
.gauge span { margin: 0 2px 1px 0; letter-spacing: -.1px; }

/* status bar */
.status { border-top: 1px solid #c0c0c0; background: #f0f0f0; display: flex; align-items: center; padding-left: 7px; padding-bottom: 3px; height: 27px; gap: 19px; white-space: nowrap; color: #555; }
.s-page { width: 109px; letter-spacing: .15px; }
.macro { margin-left: 2px; }
.views { margin-left: auto; display: grid; grid-template-columns: 28px 54px 33px 13px 129px 28px 48px; align-items: center; }
.vsel { background: #c8c8c8; width: 41px; height: 26px; display: grid; place-items: center; margin-bottom: -3px; }
.minus { width: 9px; height: 2px; background: #666; }
.track { width: 125px; height: 14px; display: grid; place-items: center; background: linear-gradient(#aaa, #aaa) 0 7px / 100% 1px no-repeat; }
.track i { width: 5px; height: 14px; background: #666; }

/* taskbar */
.taskbar { background: #0d0d0d; position: relative; display: flex; justify-content: space-between; overflow: hidden; color: #fff; }
.wall { position: absolute; left: 460px; top: -8px; font: 60px/60px "Liberation Serif", serif; letter-spacing: 16.5px; color: #180f0f; white-space: nowrap; }
.tasks { position: relative; display: grid; grid-template-columns: 60px 60px 60px 14px 70px 62px 62px 62px 62px 62px 62px 63px 61px; }
.tasks span { display: grid; place-items: center; }
.tasks .joy { padding-left: 6px; }
.tasks .run { background: linear-gradient(#76b9ed, #76b9ed) center bottom / 51px 3px no-repeat; }
.tasks .cur { background: linear-gradient(#76b9ed, #76b9ed) center bottom / 100% 3px no-repeat #3d3d3d; }
.tray { display: grid; grid-template-columns: 18px 25px 32px 29px 30px 30px 30px 30px 30px 30px 30px 30px 32px 27px 31px 36px 118px 6px; align-items: center; width: 594px; position: relative; }
.ch { font: 16px "Liberation Serif", serif; letter-spacing: -1.5px; transform: scaleX(.8); transform-origin: left; margin-top: -3px; }
.clock { text-align: center; line-height: 21px; font-size: 16px; letter-spacing: -.4px; width: 104px; white-space: nowrap; margin-top: -1px; }
.edge { height: 50px; border-left: 1px solid #555; }
```
